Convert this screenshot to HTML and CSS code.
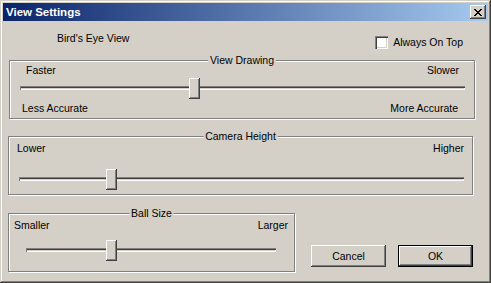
FILE: index.html
```html
<!DOCTYPE html>
<html lang="en">
<head>
  <meta charset="UTF-8">
  <title>View Settings</title>
  <link rel="stylesheet" href="styles.css">
</head>
<body>

  <div class="window">
    <div class="titlebar">
      <span class="title">View Settings</span>
      <span class="close-btn">
        <svg width="8" height="7" viewBox="0 0 8 7" shape-rendering="crispEdges">
          <path fill="#000" d="M0 0h2v1H0zM6 0h2v1H6zM1 1h2v1H1zM5 1h2v1H5zM2 2h4v1H2zM3 3h2v1H3zM2 4h4v1H2zM1 5h2v1H1zM5 5h2v1H5zM0 6h2v1H0zM6 6h2v1H6z"/>
        </svg>
      </span>
    </div>

    <div class="content">
      <div class="top-row">
        <span class="view-name">Bird's Eye View</span>
        <label class="check"><span class="check-box"></span>Always On Top</label>
      </div>

      <div class="group group-drawing">
        <span class="caption">View Drawing</span>
        <div class="labels"><span>Faster</span><span>Slower</span></div>
        <div class="slider">
          <div class="groove"></div>
          <div class="thumb" style="left: 169px"></div>
        </div>
        <div class="labels labels-bottom"><span>Less Accurate</span><span>More Accurate</span></div>
      </div>

      <div class="group group-camera">
        <span class="caption">Camera Height</span>
        <div class="labels"><span>Lower</span><span>Higher</span></div>
        <div class="slider">
          <div class="groove"></div>
          <div class="thumb" style="left: 87px"></div>
        </div>
      </div>

      <div class="bottom-row">
        <div class="group group-ball">
          <span class="caption">Ball Size</span>
          <div class="labels"><span>Smaller</span><span>Larger</span></div>
          <div class="slider">
            <div class="groove"></div>
            <div class="thumb" style="left: 80px"></div>
          </div>
        </div>
        <div class="buttons">
          <button class="btn">Cancel</button>
          <button class="btn btn-default">OK</button>
        </div>
      </div>
    </div>
  </div>

</body>
</html>
```

FILE: styles.css
```css
* {
  box-sizing: border-box;
}

body {
  margin: 0;
  padding: 0;
  font-family: "Liberation Sans", Arial, sans-serif;
  font-size: 10.5px;
  line-height: 13px;
  color: #000;
  background-color: #d4d0c8;
}

/* window frame */
.window {
  width: 491px;
  height: 283px;
  padding: 3px;
  background-color: #d4d0c8;
  box-shadow: inset -1px -1px #404040, inset 1px 1px #d4d0c8,
              inset -2px -2px #808080, inset 2px 2px #fff;
}

.titlebar {
  height: 18px;
  display: flex;
  align-items: center;
  justify-content: space-between;
  padding: 0 2px 0 3px;
  background: linear-gradient(to right, #0a246a, #a6caf0);
}

.title {
  color: #fff;
  font-weight: bold;
  font-size: 11.5px;
}

.close-btn {
  width: 16px;
  height: 14px;
  display: flex;
  align-items: center;
  justify-content: center;
  padding-right: 1px;
  background-color: #d4d0c8;
  box-shadow: inset -1px -1px #404040, inset 1px 1px #fff, inset -2px -2px #808080;
}

/* dialog body */
.content {
  display: flex;
  flex-direction: column;
}

.top-row {
  height: 39px;
  display: flex;
  align-items: flex-start;
  justify-content: space-between;
}

.view-name {
  margin: 11px 0 0 54px;
}

.check {
  display: flex;
  align-items: center;
  gap: 5px;
  margin: 15px 25px 0 0;
}

.check-box {
  width: 13px;
  height: 13px;
  background-color: #fff;
  box-shadow: inset 1px 1px #808080, inset 2px 2px #404040,
              inset -1px -1px #fff, inset -2px -2px #d4d0c8;
}

/* group boxes */
.group {
  position: relative;
  height: 59px;
  border: 1px solid #808080;
  box-shadow: 1px 1px 0 #fff, inset 1px 1px 0 #fff;
}

.caption {
  position: absolute;
  top: -7px;
  left: 50%;
  transform: translateX(-50%);
  padding: 0 2px;
  background-color: #d4d0c8;
  white-space: nowrap;
}

.labels {
  display: flex;
  justify-content: space-between;
}

.slider {
  position: relative;
  height: 21px;
  padding-top: 8px;
}

.groove {
  height: 4px;
  box-shadow: inset 1px 1px #808080, inset 0 2px #404040,
              inset -1px -1px #fff;
}

.thumb {
  position: absolute;
  top: 0;
  width: 11px;
  height: 21px;
  background-color: #d4d0c8;
  box-shadow: inset -1px -1px #404040, inset 1px 1px #fff, inset -2px -2px #808080;
}

.group-drawing {
  width: 466px;
  margin-left: 6px;
}

.group-drawing .labels {
  margin-top: 3px;
  padding: 0 15px 0 16px;
}

.group-drawing .slider {
  margin: 1px 9px 0 10px;
}

.group-drawing .labels-bottom {
  padding: 0 16px 0 12px;
}

.group-camera {
  width: 465px;
  margin: 17px 0 0 5px;
}

.group-camera .labels {
  margin-top: 5px;
  padding: 0 8px;
}

.group-camera .slider {
  margin: 14px 8px 0 10px;
}

.bottom-row {
  display: flex;
  align-items: flex-end;
  margin: 18px 0 0 5px;
}

.group-ball {
  width: 287px;
}

.group-ball .labels {
  margin-top: 5px;
  padding: 0 6px 0 5px;
}

.group-ball .slider {
  margin: 8px 18px 0 17px;
}

/* buttons */
.buttons {
  display: flex;
  gap: 12px;
  margin: 0 0 5px 16px;
}

.btn {
  width: 75px;
  height: 22px;
  padding: 0;
  border: none;
  font-family: inherit;
  font-size: 10.5px;
  color: #000;
  background-color: #d4d0c8;
  box-shadow: inset -1px -1px #404040, inset 1px 1px #fff, inset -2px -2px #808080;
}

.btn-default {
  border: 1px solid #000;
}
```
